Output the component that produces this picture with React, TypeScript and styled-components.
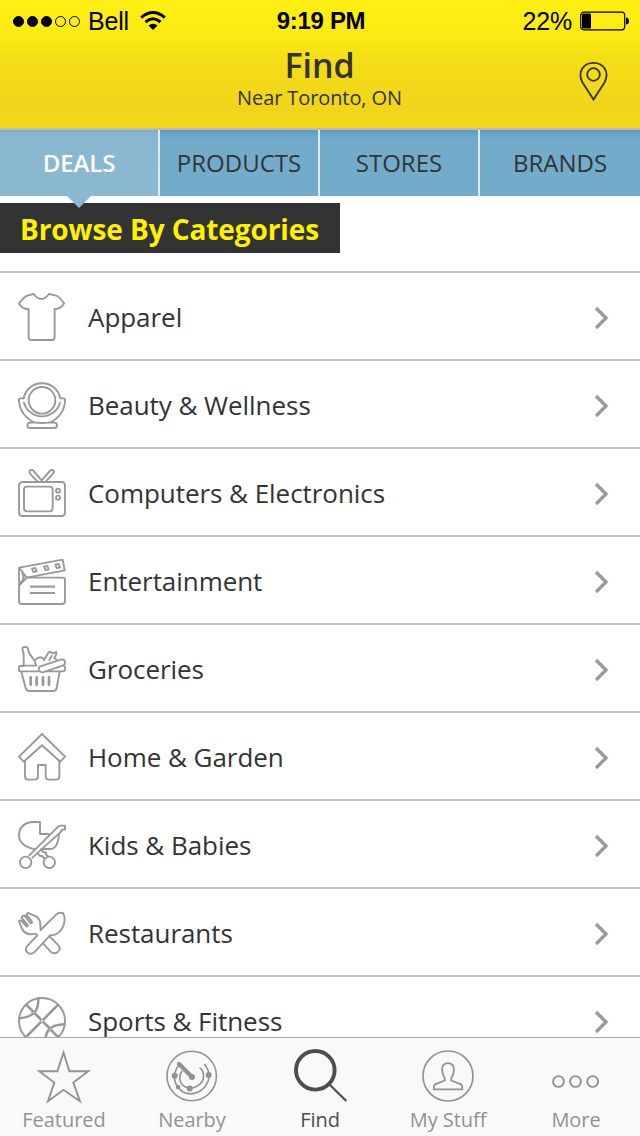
import React from "react";
import styled, { createGlobalStyle } from "styled-components";

const GlobalStyle = createGlobalStyle`
  * { box-sizing: border-box; }
  body { margin: 0; background: #fff; font-family: "Open Sans", "Noto Sans", sans-serif; color: #333; }
`;

const Screen = styled.div`
  width: 640px;
  height: 1136px;
  display: flex;
  flex-direction: column;
  overflow: hidden;
  background: #fff;
`;

const Header = styled.header`
  flex: none;
  height: 130px;
  border-bottom: 2px solid #bdbdb4;
  background: linear-gradient(#ffef14 0, #fcea14 38px, #f5df16 56px, #f1d51b 104px, #f2d61a 128px);
`;

const StatusBar = styled.div`
  height: 40px;
  padding: 1px 11px 0 13px;
  display: grid;
  grid-template-columns: 1fr auto 1fr;
  align-items: center;
  font: 25px/40px "Liberation Sans", Arial, sans-serif;
  color: #000;
`;

const StatusGroup = styled.div<{ $end?: boolean }>`
  display: flex;
  align-items: center;
  justify-content: ${(p) => (p.$end ? "flex-end" : "flex-start")};
  gap: 8px;
`;

const StatusText = styled.span`
  letter-spacing: -0.2px;
`;

const Clock = styled.span`
  font-size: 24px;
  font-weight: 700;
  letter-spacing: -0.3px;
`;

const Signal = styled.div`
  display: flex;
  gap: 3px;
`;

const SignalDot = styled.i<{ $on: boolean }>`
  width: 11px;
  height: 11px;
  border-radius: 50%;
  border: 1px solid #000;
  background: ${(p) => (p.$on ? "#000" : "transparent")};
`;

const NavBar = styled.div`
  height: 88px;
  display: grid;
  grid-template-columns: 80px 1fr 80px;
`;

const TitleBlock = styled.div`
  grid-column: 2;
  display: flex;
  flex-direction: column;
  align-items: center;
  padding: 5px 1px 0 0;
`;

const Title = styled.h1`
  margin: 0;
  font-size: 34px;
  line-height: 41px;
  font-weight: 600;
  letter-spacing: -0.1px;
`;

const Subtitle = styled.p`
  margin: 0;
  font-size: 20px;
  line-height: 24px;
  letter-spacing: -0.1px;
`;

const PinButton = styled.div`
  padding: 21px 0 0 18px;
`;

const Tabs = styled.nav`
  flex: none;
  height: 66px;
  display: grid;
  grid-template-columns: repeat(4, 160px);
`;

const Tab = styled.div<{ $active?: boolean; $last?: boolean }>`
  position: relative;
  display: flex;
  align-items: center;
  justify-content: center;
  font-size: 24px;
  line-height: 66px;
  font-weight: ${(p) => (p.$active ? 600 : 400)};
  letter-spacing: ${(p) => (p.$active ? "-0.1px" : "0")};
  color: ${(p) => (p.$active ? "#fff" : "#333")};
  border-right: ${(p) => (p.$last ? "0" : "2px solid #e3e8eb")};
  background: ${(p) =>
    p.$active
      ? "linear-gradient(#7facc1 0, #89b7cf 6px, #8bb9d1 100%)"
      : "linear-gradient(#6399b8 0, #6ea7c7 6px, #73accb 14px)"};
`;

const Pointer = styled.i`
  position: absolute;
  left: 67px;
  top: 66px;
  z-index: 1;
  border: 12px solid transparent;
  border-top-color: #8bb9d1;
  border-bottom: 0;
`;

const Banner = styled.h2`
  flex: none;
  margin: 7px 0 18px;
  width: 340px;
  height: 50px;
  padding-left: 20px;
  background: #333;
  color: #fff100;
  font-size: 28px;
  line-height: 53px;
  font-weight: 700;
  letter-spacing: -0.09px;
  white-space: nowrap;
`;

const List = styled.div`
  flex: 1;
  min-height: 0;
  overflow: hidden;
  border-top: 2px solid #c6c6c6;
`;

const Row = styled.div`
  height: 88px;
  padding: 2px 31px 0 18px;
  border-bottom: 2px solid #c6c6c6;
  display: flex;
  align-items: center;
`;

const RowLabel = styled.span`
  flex: 1;
  margin-left: 22px;
  font-size: 26px;
  line-height: 36px;
  letter-spacing: -0.05px;
`;

const Chevron = styled.svg`
  width: 15px;
  height: 25px;
  fill: none;
  stroke: #999;
  stroke-width: 3.4;
`;

const LineIcon = styled.svg`
  display: block;
  width: 48px;
  height: 48px;
  fill: none;
  stroke: #999;
  stroke-width: 5.7;
  stroke-linecap: round;
  stroke-linejoin: round;
`;

const BottomBar = styled.nav`
  flex: none;
  height: 99px;
  border-top: 1px solid #a8a8a8;
  background: #f9f9f9;
  display: grid;
  grid-template-columns: repeat(5, 128px);
`;

const BarItem = styled.div<{ $active?: boolean }>`
  display: flex;
  flex-direction: column;
  align-items: center;
  padding-top: 10px;
  color: ${(p) => (p.$active ? "#4a4e50" : "#929292")};
  font-size: 20px;
  line-height: 28px;
  letter-spacing: -0.05px;
`;

const BarIcon = styled.svg`
  width: 56px;
  height: 58px;
  fill: none;
  stroke: currentColor;
`;

const categories = [
  {
    name: "Apparel",
    box: "54 39 144 144",
    art: <path d="M101 42Q124 72 147 42L166 46Q176 48 182 57L192 70Q184 87 164 87V172Q164 180 156 180H94Q86 180 86 172V87Q66 87 57 71L68 57Q76 48 84 46Z" />,
  },
  {
    name: "Beauty & Wellness",
    box: "54 303 144 144",
    art: (
      <>
        <circle cx="126" cy="361" r="40" />
        <path d="M71 355A56 56 0 0 1 181 355" />
        <path d="M72 368A56 56 0 0 0 180 368" />
        <path d="M71 355H61Q56 355 57 363Q60 405 103 428H90Q82 428 82 436Q82 444 90 444H163Q171 444 171 436Q171 428 163 428H150Q193 405 195 363Q196 355 191 355H181M103 427Q126 431 149 427" />
      </>
    ),
  },
  {
    name: "Computers & Electronics",
    box: "54 27 144 144",
    art: (
      <>
        <path d="M113 65L92 43Q84 32 93 30Q100 28 104 37L125 61L147 36Q152 27 159 31Q165 35 157 43L137 65" />
        <rect x="57" y="66" width="138" height="102" rx="10" />
        <rect x="72" y="80" width="86" height="74" rx="9" />
        <circle cx="174" cy="92" r="6" />
        <circle cx="174" cy="113" r="6" />
      </>
    ),
  },
  {
    name: "Entertainment",
    box: "54 291 144 144",
    art: (
      <>
        <path d="M80 353H188Q195 353 195 360V424Q195 432 187 432H65Q57 432 57 424V375Z" />
        <path d="M80 353L194 331L188 299L57 323L80 353L58 375L56 327M67 340Q76 353 61 370" />
        <path d="M96 326L106 324L110 334L100 336ZM132 320L142 318L146 328L136 330ZM166 314L176 312L180 322L170 324Z" />
        <path d="M90 380H165M90 399H165" strokeLinecap="butt" strokeWidth="6.5" />
      </>
    ),
  },
  {
    name: "Groceries",
    box: "54 30 144 144",
    art: (
      <>
        <path d="M114 109H60Q57 109 57 105V96Q57 93 60 93H71V58L67 42Q66 36 75 36Q83 35 84 43L88 55L104 78L109 92H72" />
        <path d="M106 75Q118 60 133 73M132 76L146 52L151 50L157 55L169 51V58L163 69L170 74M155 63L148 75" />
        <path d="M119 95L182 74Q193 72 195 80Q196 88 190 91L128 112Q119 112 117 105Q115 98 119 95ZM190 91Q197 94 195 105Q194 109 188 109H137" />
        <path d="M64 110L77 159Q79 168 89 168H160Q168 168 170 159L179 110" />
        <path d="M92 127V149M110 127V149M129 127V149M147 127V149" strokeWidth="8" />
      </>
    ),
  },
  {
    name: "Home & Garden",
    box: "54 294 144 144",
    art: (
      <>
        <path d="M126 297L195 365L181 380L126 331L71 380L57 365Z" />
        <path d="M75 378V424Q75 434 85 434H103Q114 434 114 424V390H137V424Q137 434 148 434H168Q178 434 178 424V378" />
      </>
    ),
  },
  {
    name: "Kids & Babies",
    box: "54 33 144 144",
    art: (
      <>
        <path d="M102 117C71 110 57 95 57 75C57 48 79 36 101 36H120V72H146" />
        <path d="M88 136L172 52Q177 47 183 47H195V59H187L181 67L97 143M177 72C175 102 166 117 150 117H127" />
        <path d="M123 118L130 126L138 127V133L143 138M112 130L121 138H126L134 146" />
        <circle cx="77" cy="157" r="17" />
        <circle cx="148" cy="157" r="17" />
      </>
    ),
  },
  {
    name: "Restaurants",
    box: "54 297 144 144",
    art: (
      <>
        <path d="M122 360L169 313Q179 305 190 310Q199 331 187 354Q174 377 150 376L103 427Q92 436 82 427Q74 420 80 410L112 376L106 371Q76 379 65 354L57 334Q59 329 65 333L80 350Q86 350 82 343L65 324Q66 315 74 318L92 340Q99 340 94 332L79 315Q81 306 89 311L108 319Q122 328 121 346L122 360" />
        <path d="M130 401L151 424Q162 435 173 426Q184 418 176 407L149 379" />
      </>
    ),
  },
  {
    name: "Sports & Fitness",
    box: "54 51 144 144",
    art: (
      <>
        <circle cx="126" cy="123" r="69" />
        <path d="M81 76L121 117M132 128L148 144M154 151L174 171M172 76L131 118M121 128L79 170" strokeWidth="8" />
        <path d="M115 55Q116 83 103 98Q87 113 59 115M193 133Q162 134 149 147Q135 160 136 188" strokeWidth="7.5" />
        <circle cx="126" cy="123" r="5" strokeWidth="4" fill="#fff" />
        <circle cx="101" cy="98" r="4" strokeWidth="4" fill="#fff" />
        <circle cx="151" cy="148" r="4" strokeWidth="4" fill="#fff" />
      </>
    ),
  },
];

const tabs = ["DEALS", "PRODUCTS", "STORES", "BRANDS"];

const barItems = [
  { name: "Featured", art: <path d="M27.5 4.5L33.4 23.3H52.3L37.3 34.5L44 53.2L27.5 41.8L12 53.2L18.3 34.5L3.2 23.3H21.4Z" strokeWidth="1.9" /> },
  {
    name: "Nearby",
    art: (
      <>
        <circle cx="27.7" cy="28" r="24.7" strokeWidth="1.6" />
        <path d="M15 17C7 27 10 38 19 44C29 49 41 43 44.5 32C46 25 44 20 40 16" strokeWidth="1.6" />
        <path d="M18 23C13 31 17 38 24 40C33 41 40 34 39.5 28C39.5 24 38 21 35.5 20" strokeWidth="1.6" />
        <path d="M15 16L28 29" strokeWidth="4.2" strokeLinecap="round" />
        <g fill="currentColor" stroke="none">
          <circle cx="28" cy="29" r="3" />
          <circle cx="10.7" cy="27.7" r="3" />
          <circle cx="44.7" cy="27" r="3" />
          <circle cx="25.7" cy="40.5" r="3" />
          <circle cx="14" cy="39" r="2.3" />
        </g>
      </>
    ),
  },
  {
    name: "Find",
    active: true,
    art: (
      <>
        <circle cx="23.3" cy="22.3" r="19.3" strokeWidth="3.9" />
        <path d="M37 36L54.3 53" strokeWidth="2.2" />
      </>
    ),
  },
  {
    name: "My Stuff",
    art: (
      <>
        <circle cx="28" cy="28" r="25" strokeWidth="1.7" />
        <path d="M24.8 30C21.8 26 23 25.5 22 21.5C21.5 13 34.5 13 34 21.5C33 25.5 34.2 26 31.3 30V32.5L41 36.3Q42.3 37.3 42.3 41.3H13.8Q13.8 37.3 15 36.3L24.8 32.5Z" strokeWidth="1.8" />
      </>
    ),
  },
  {
    name: "More",
    art: (
      <g strokeWidth="1.9">
        <circle cx="10.5" cy="33.5" r="5.4" />
        <circle cx="27.5" cy="33.5" r="5.4" />
        <circle cx="44.7" cy="33.5" r="5.4" />
      </g>
    ),
  },
];

export default function App() {
  return (
    <>
      <GlobalStyle />
      <Screen>
        <Header>
          <StatusBar>
            <StatusGroup>
              <Signal>
                {[1, 1, 1, 0, 0].map((on, i) => (
                  <SignalDot key={i} $on={!!on} />
                ))}
              </Signal>
              <StatusText>Bell</StatusText>
              <svg width="32" height="24" viewBox="0 0 32 24" fill="none" stroke="#000" strokeWidth="3">
                <path d="M4.2 8.6Q16-1.5 27.8 8.6M8.5 13Q16 6.6 23.5 13" />
                <path d="M11.5 16.5Q16 13 20.5 16.5L16 21Z" fill="#000" stroke="none" />
              </svg>
            </StatusGroup>
            <Clock>9:19 PM</Clock>
            <StatusGroup $end>
              <StatusText>22%</StatusText>
              <svg width="49" height="20" viewBox="0 0 49 20">
                <rect x="0.7" y="1.2" width="44" height="17.6" rx="3" fill="none" stroke="#000" strokeWidth="1.2" />
                <rect x="2" y="2.5" width="9" height="15" rx="1" />
                <path d="M46 6.5Q49 6.5 49 10Q49 13.5 46 13.5Z" />
              </svg>
            </StatusGroup>
          </StatusBar>
          <NavBar>
            <TitleBlock>
              <Title>Find</Title>
              <Subtitle>Near Toronto, ON</Subtitle>
            </TitleBlock>
            <PinButton>
              <svg width="32" height="42" viewBox="0 0 32 42" fill="none" stroke="#333" strokeWidth="1.8">
                <path d="M15.5 38.5L4.5 21.5C-1.2 10.5 6 1.9 15.5 1.9S32.2 10.5 26.5 21.5Z" />
                <circle cx="15.5" cy="13.5" r="6.3" />
              </svg>
            </PinButton>
          </NavBar>
        </Header>
        <Tabs>
          {tabs.map((t, i) => (
            <Tab key={t} $active={i === 0} $last={i === 3}>
              {t}
              {i === 0 && <Pointer />}
            </Tab>
          ))}
        </Tabs>
        <Banner>Browse By Categories</Banner>
        <List>
          {categories.map((c) => (
            <Row key={c.name}>
              <LineIcon viewBox={c.box}>{c.art}</LineIcon>
              <RowLabel>{c.name}</RowLabel>
              <Chevron viewBox="0 0 15 25">
                <path d="M2 3L12 13L2 23" />
              </Chevron>
            </Row>
          ))}
        </List>
        <BottomBar>
          {barItems.map((b) => (
            <BarItem key={b.name} $active={b.active}>
              <BarIcon viewBox="0 0 56 58">{b.art}</BarIcon>
              {b.name}
            </BarItem>
          ))}
        </BottomBar>
      </Screen>
    </>
  );
}
